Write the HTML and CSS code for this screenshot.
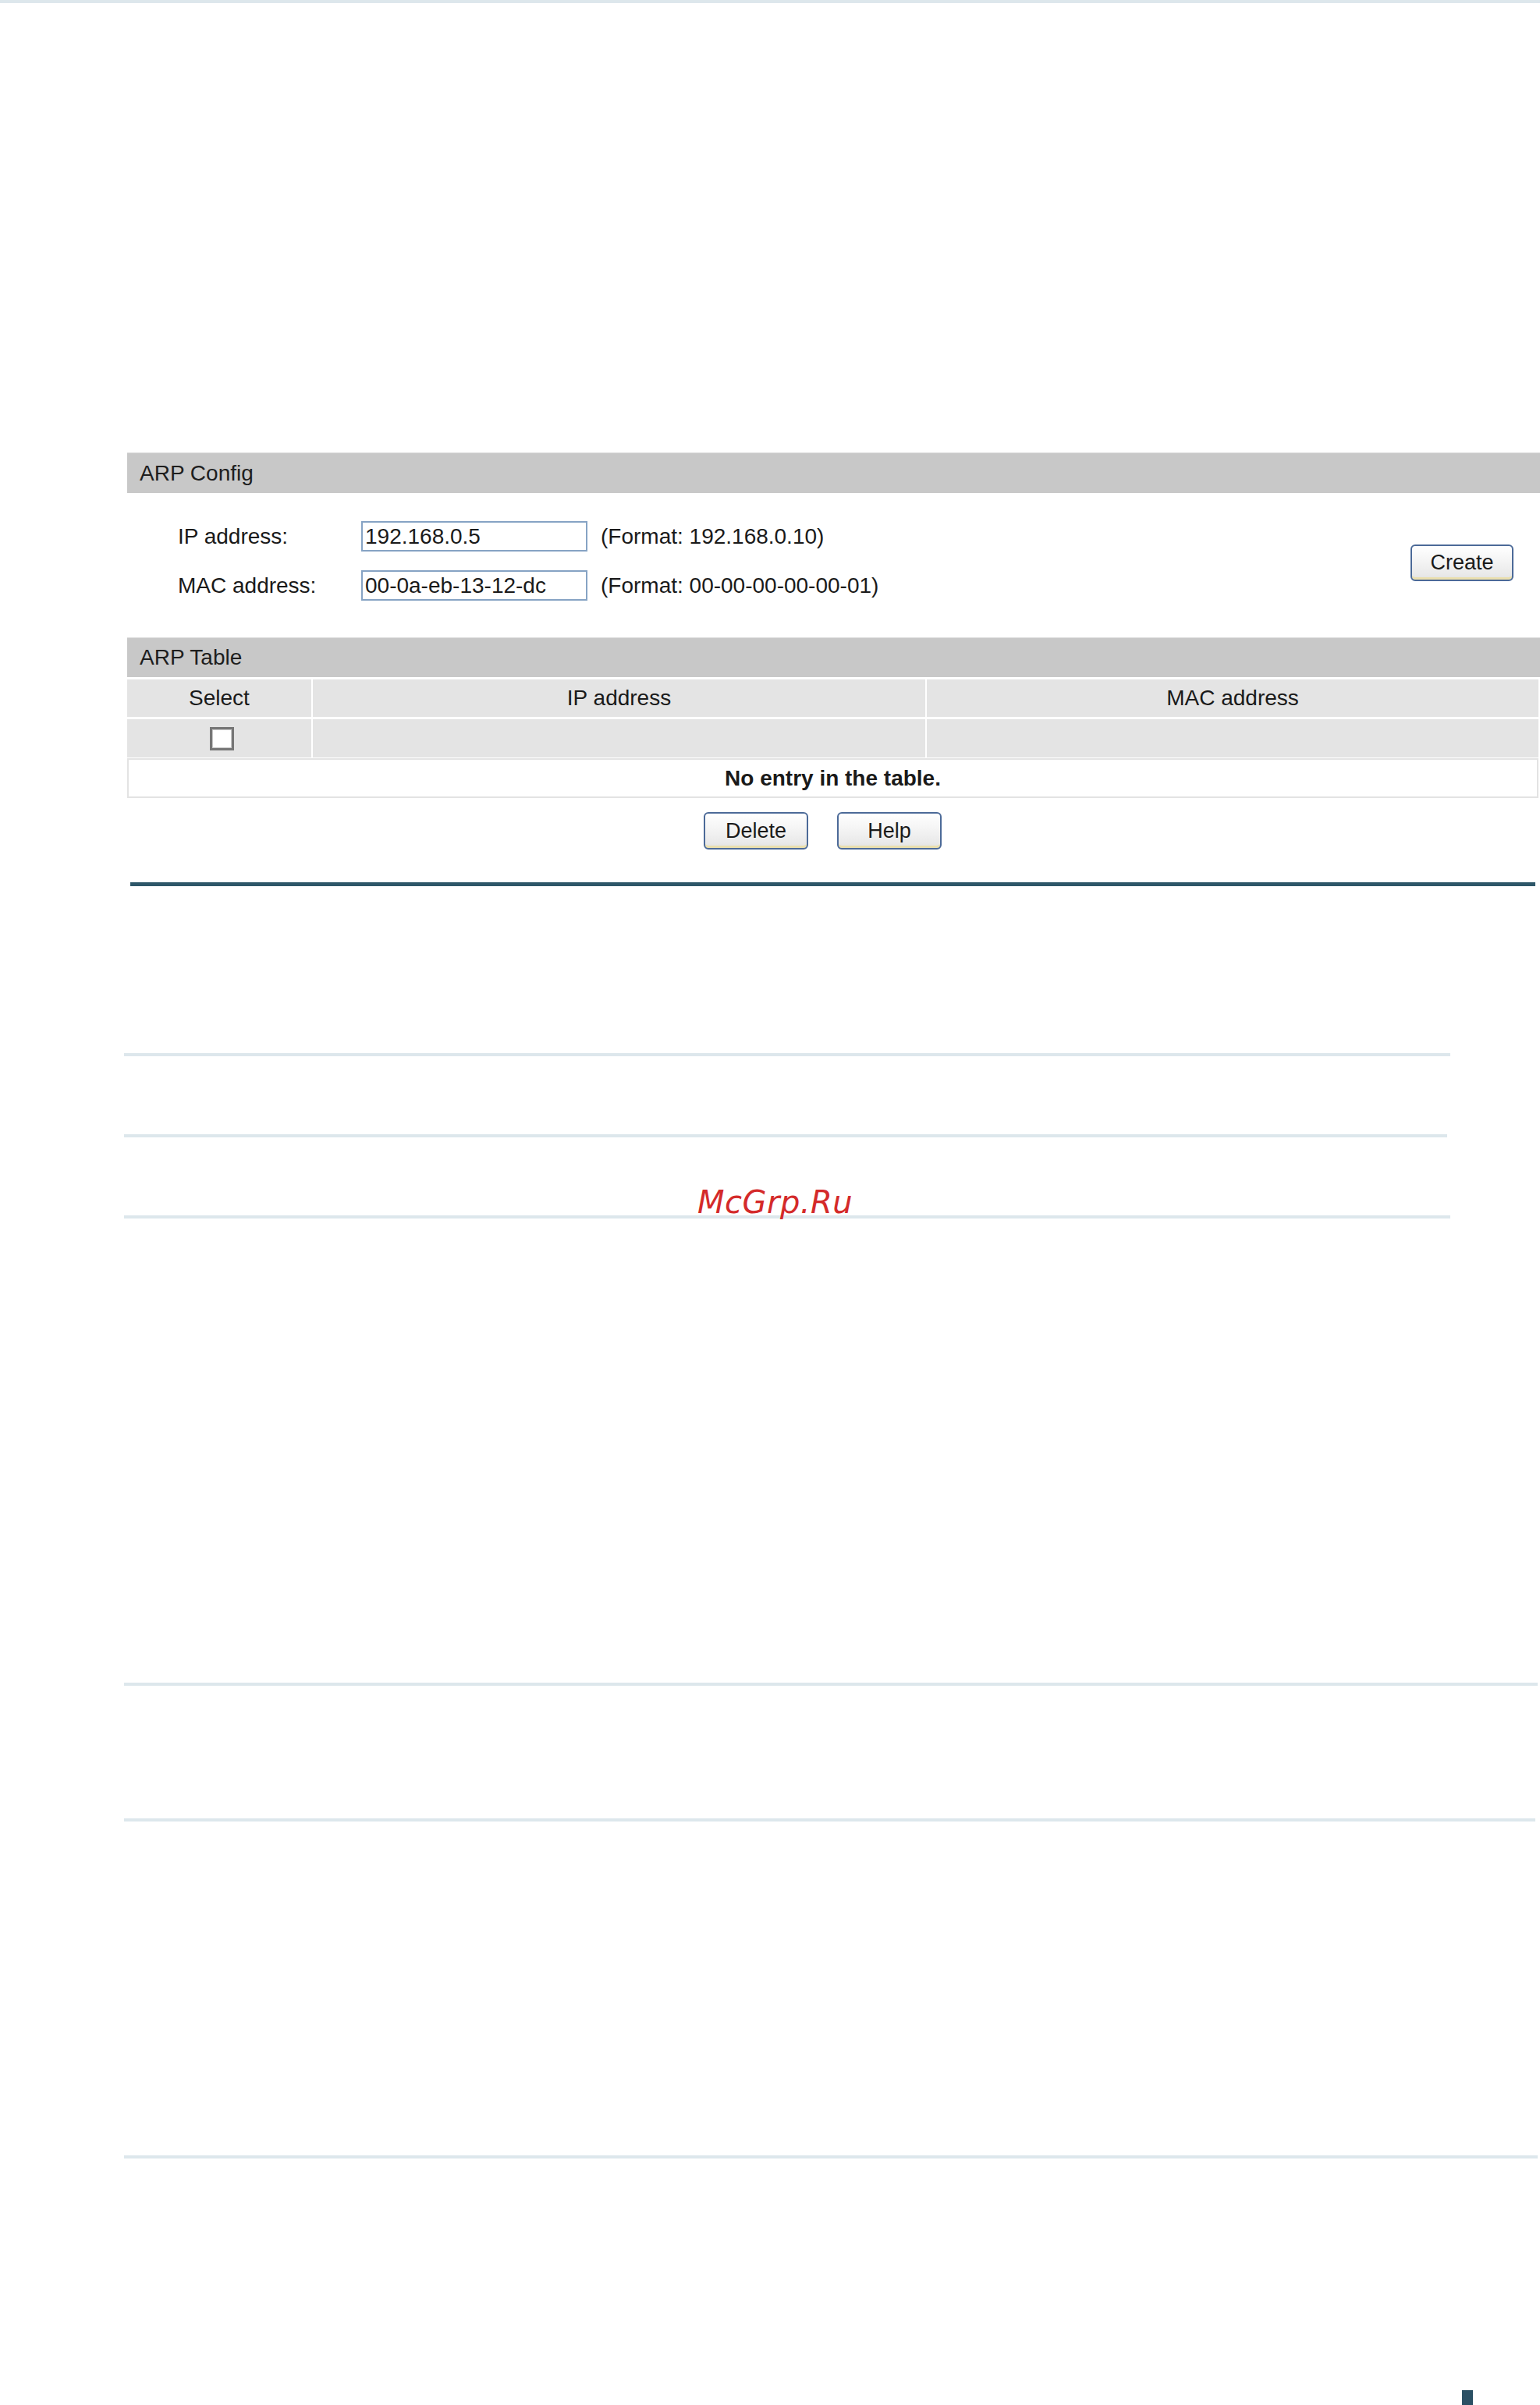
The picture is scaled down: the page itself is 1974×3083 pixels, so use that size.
FILE: index.html
```html
<!DOCTYPE html>
<html lang="en">
<head>
<meta charset="utf-8">
<title>ARP Config</title>
<link rel="stylesheet" href="styles.css">
</head>
<body>
<div class="topline"></div>
<main class="page">
  <section class="panel">
    <div class="bar bar-config">ARP Config</div>
    <div class="config">
      <div class="fields">
        <div class="row">
          <label class="label" for="ip">IP address:</label>
          <input class="field" id="ip" type="text" value="192.168.0.5">
          <span class="hint">(Format: 192.168.0.10)</span>
        </div>
        <div class="row">
          <label class="label" for="mac">MAC address:</label>
          <input class="field" id="mac" type="text" value="00-0a-eb-13-12-dc">
          <span class="hint">(Format: 00-00-00-00-00-01)</span>
        </div>
      </div>
      <button class="btn btn-create" type="button">Create</button>
    </div>
    <div class="bar bar-table">ARP Table</div>
    <div class="arp">
      <div class="arp-row arp-head">
        <div class="cell">Select</div>
        <div class="cell">IP address</div>
        <div class="cell">MAC address</div>
      </div>
      <div class="arp-row arp-body">
        <div class="cell cell-check"><input class="check" type="checkbox"></div>
        <div class="cell"></div>
        <div class="cell"></div>
      </div>
      <div class="arp-empty">No entry in the table.</div>
    </div>
    <div class="actions">
      <button class="btn" type="button">Delete</button>
      <button class="btn" type="button">Help</button>
    </div>
    <div class="dark-rule"></div>
  </section>

  <div class="rule rule-a rule-1"></div>
  <div class="rule rule-a rule-2"></div>
  <div class="rule rule-a rule-3"><span class="watermark">McGrp.Ru</span></div>
  <div class="rule rule-b rule-4"></div>
  <div class="rule rule-b rule-5"></div>
  <div class="rule rule-b rule-6"></div>
  <div class="page-mark"></div>
</main>
</body>
</html>
```
FILE: styles.css
```css
html, body {
  margin: 0;
  padding: 0;
  background: #ffffff;
}

body {
  width: 1974px;
  height: 3083px;
  overflow: hidden;
  font-family: "Liberation Sans", Arial, sans-serif;
  color: #1a1a1a;
}

.topline {
  height: 4px;
  background: #dde7ec;
}

.page {
  display: flex;
  flex-direction: column;
}

/* ---------- panel ---------- */
.panel {
  margin-top: 576px;
  margin-left: 163px;
  display: flex;
  flex-direction: column;
}

.bar {
  background: #c8c8c8;
  border-top: 1px solid #dcdcdc;
  box-sizing: border-box;
  font-size: 28px;
  padding-left: 16px;
  color: #1e1e1e;
}

.bar-config {
  height: 52px;
  line-height: 51px;
}

.bar-table {
  height: 51px;
  line-height: 50px;
}

.config {
  display: flex;
  justify-content: space-between;
  align-items: flex-start;
  height: 185px;
  box-sizing: border-box;
}

.fields {
  display: flex;
  flex-direction: column;
  gap: 24px;
  padding-top: 36px;
  padding-left: 65px;
}

.row {
  display: flex;
  align-items: center;
  height: 39px;
  font-size: 28px;
}

.label {
  width: 235px;
}

.field {
  box-sizing: border-box;
  width: 290px;
  height: 39px;
  border: 2px solid #86a3c4;
  padding: 0 3px;
  margin: 0;
  font-family: "Liberation Sans", Arial, sans-serif;
  font-size: 28px;
  color: #1a1a1a;
  background: #fff;
}

.hint {
  margin-left: 17px;
}

.btn {
  box-sizing: border-box;
  width: 134px;
  height: 48px;
  margin: 0;
  padding: 0;
  border: 2px solid #4c6a98;
  border-radius: 6px;
  background: linear-gradient(#ffffff, #f4f4f4 45%, #e9e9e9 85%, #e2e2e2);
  box-shadow: inset 0 -4px 0 -1px #eadfae;
  font-family: "Liberation Sans", Arial, sans-serif;
  font-size: 27px;
  color: #1a1a1a;
}

.btn-create {
  width: 132px;
  height: 47px;
  margin-top: 66px;
  margin-right: 34px;
}

/* ---------- table ---------- */
.arp {
  margin-right: 2px;
  display: flex;
  flex-direction: column;
}

.arp-row {
  display: grid;
  grid-template-columns: 236px 785px 1fr;
  column-gap: 2px;
  margin-top: 3px;
}

.arp-head {
  height: 48px;
}

.arp-body {
  height: 49px;
}

.cell {
  background: #e4e4e4;
  font-size: 28px;
  display: flex;
  align-items: center;
  justify-content: center;
}

.cell-check {
  padding-left: 6px;
}

.check {
  appearance: none;
  -webkit-appearance: none;
  box-sizing: border-box;
  width: 31px;
  height: 30px;
  margin: 0;
  border: 3px solid #767676;
  background: #fff;
  box-shadow: inset 0 0 0 1px #c9c9c9;
}

.arp-empty {
  margin-top: 1px;
  height: 51px;
  box-sizing: border-box;
  border: 2px solid #e3e3e3;
  font-size: 28px;
  font-weight: bold;
  display: flex;
  align-items: center;
  justify-content: center;
}

.actions {
  display: flex;
  gap: 37px;
  margin-top: 18px;
  padding-left: 739px;
}

.dark-rule {
  margin-top: 42px;
  margin-left: 4px;
  width: 1801px;
  height: 5px;
  background: #2d5668;
}

/* ---------- light rules ---------- */
.rule {
  height: 4px;
  margin-left: 159px;
  background: #dde7ec;
}

.rule-a { width: 1700px; }
.rule-b { width: 1812px; }

.rule-1 { margin-top: 214px; }
.rule-2 { margin-top: 100px; width: 1696px; }
.rule-3 { margin-top: 100px; position: relative; }
.rule-4 { margin-top: 595px; }
.rule-5 { margin-top: 170px; width: 1809px; }
.rule-6 { margin-top: 428px; }

.watermark {
  position: absolute;
  left: 735px;
  top: -37px;
  font-family: "DejaVu Sans", sans-serif;
  font-style: italic;
  font-size: 40px;
  line-height: 40px;
  letter-spacing: 0.5px;
  color: #d42a2a;
  white-space: nowrap;
}

.page-mark {
  margin-top: 297px;
  margin-left: 1874px;
  width: 14px;
  height: 19px;
  background: #2b5064;
}
```
